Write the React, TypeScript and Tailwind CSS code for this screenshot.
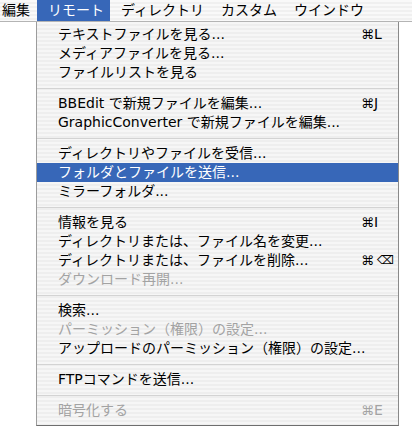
import React from "react";

type Item =
  | { sep: true }
  | { label: string; key?: string; off?: boolean; on?: boolean; sep?: false };

const items: Item[] = [
  { label: "テキストファイルを見る...", key: "L" },
  { label: "メディアファイルを見る..." },
  { label: "ファイルリストを見る" },
  { sep: true },
  { label: "BBEdit で新規ファイルを編集...", key: "J" },
  { label: "GraphicConverter で新規ファイルを編集..." },
  { sep: true },
  { label: "ディレクトリやファイルを受信..." },
  { label: "フォルダとファイルを送信...", on: true },
  { label: "ミラーフォルダ..." },
  { sep: true },
  { label: "情報を見る", key: "I" },
  { label: "ディレクトリまたは、ファイル名を変更..." },
  { label: "ディレクトリまたは、ファイルを削除...", key: "⌫" },
  { label: "ダウンロード再開...", off: true },
  { sep: true },
  { label: "検索..." },
  { label: "パーミッション（権限）の設定...", off: true },
  { label: "アップロードのパーミッション（権限）の設定..." },
  { sep: true },
  { label: "FTPコマンドを送信..." },
  { sep: true },
  { label: "暗号化する", key: "E", off: true },
];

const menus = ["ディレクトリ", "カスタム", "ウインドウ"];

export default function App() {
  return (
    <div className="w-[412px] h-[426px] overflow-hidden bg-white text-[14px] text-black font-['DejaVu_Sans','Noto_Sans_CJK_JP',sans-serif]">
      {/* menu bar */}
      <div className="h-[22px] flex items-stretch border-b border-[#b4b4b4] bg-[image:repeating-linear-gradient(to_bottom,#f9f9f9_0px,#f9f9f9_2px,#f0f0f0_2px,#f0f0f0_4px)]">
        <div className="w-[37px] pl-[2px] leading-[21px]">編集</div>
        <div className="w-[73px] pl-[11px] leading-[21px] bg-[#3767b8] text-white">リモート</div>
        {menus.map((m) => (
          <div key={m} className="pl-[11px] pr-[6px] leading-[21px]">
            {m}
          </div>
        ))}
      </div>

      {/* dropdown */}
      <div className="ml-[36px] w-[363px] h-[404px] pt-[3px] border-l border-r border-b border-l-[#9c9c9c] border-r-[#8a8a8a] border-b-[#6e6e6e] bg-[image:repeating-linear-gradient(to_bottom,#f6f6f6_0px,#f6f6f6_2px,#eeeeee_2px,#eeeeee_4px)]">
        {items.map((it, i) =>
          it.sep ? (
            <div key={i} className="h-[12px] flex items-center">
              <div className="h-px w-full bg-[#d3d3d3]" />
            </div>
          ) : (
            <div
              key={i}
              className={
                "h-[19px] flex items-center leading-[19px] " +
                (it.on ? "bg-[#3767b8] text-white" : it.off ? "text-[#a3a3a3]" : "")
              }
            >
              <span className="flex-1 pl-[21px] whitespace-nowrap">{it.label}</span>
              <span className="w-[37px] flex items-center whitespace-nowrap">
                {it.key && <span className="text-[13px]">⌘</span>}
                {it.key === "⌫" ? (
                  <span className="ml-[3px] text-[12px]">⌫</span>
                ) : (
                  <span>{it.key}</span>
                )}
              </span>
            </div>
          )
        )}
      </div>
    </div>
  );
}
